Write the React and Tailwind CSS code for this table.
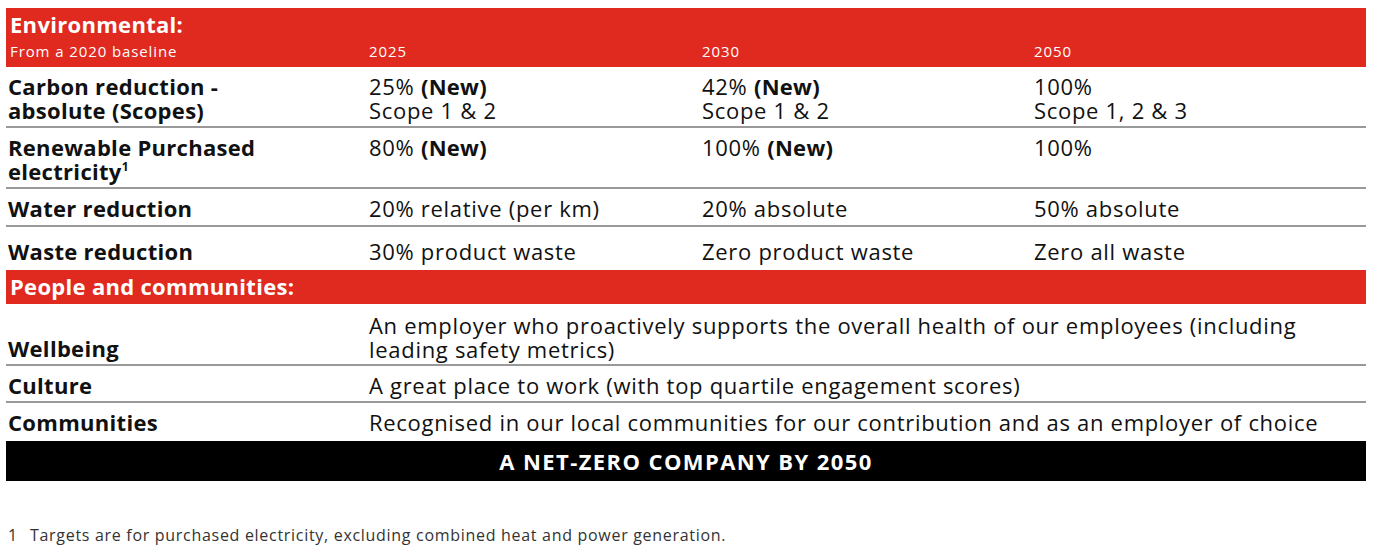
const cols = 'grid grid-cols-[363px_333px_332px_332px]';

const envRows = [
  {
    label: ['Carbon reduction -', 'absolute (Scopes)'],
    vals: [
      [<>25% <b className="tracking-[0.3px]">(New)</b></>, 'Scope 1 & 2'],
      [<>42% <b className="tracking-[0.3px]">(New)</b></>, 'Scope 1 & 2'],
      ['100%', 'Scope 1, 2 & 3'],
    ],
    cls: 'h-[61px] pt-[7px] border-b-2',
  },
  {
    label: ['Renewable Purchased', <>electricity<sup className="text-[12px] -top-[9px] leading-none">1</sup></>],
    vals: [
      [<>80% <b className="tracking-[0.3px]">(New)</b></>],
      [<>100% <b className="tracking-[0.3px]">(New)</b></>],
      ['100%'],
    ],
    cls: 'h-[61px] pt-[7px] border-b-2',
  },
  {
    label: ['Water reduction'],
    vals: [['20% relative (per km)'], ['20% absolute'], ['50% absolute']],
    cls: 'h-[38px] pt-[7px] border-b-2',
  },
  {
    label: ['Waste reduction'],
    vals: [['30% product waste'], ['Zero product waste'], ['Zero all waste']],
    cls: 'h-[43px] pt-[12px]',
  },
];

const peopleRows = [
  {
    label: 'Wellbeing',
    text: 'An employer who proactively supports the overall health of our employees (including leading safety metrics)',
    cls: 'h-[62px] pt-[9px] border-b-2',
    labelCls: 'pt-[23px]',
  },
  {
    label: 'Culture',
    text: 'A great place to work (with top quartile engagement scores)',
    cls: 'h-[37px] pt-[7px] border-b-2',
    labelCls: '',
  },
  {
    label: 'Communities',
    text: 'Recognised in our local communities for our contribution and as an employer of choice',
    cls: 'h-[38px] pt-[7px]',
    labelCls: '',
  },
];

export default function App() {
  return (
    <div className="w-[1380px] h-[555px] bg-white pl-[6px] pt-[8px] font-['Open_Sans',sans-serif] text-[#111]">
      <div className="w-[1360px]">
        {/* Environmental header */}
        <div className="h-[59px] bg-[#e0291f] text-white pt-[4px]">
          <div className="pl-[4px] text-[22px] font-bold leading-[24px] tracking-[0.3px]">Environmental:</div>
          <div className={`${cols} text-[15px] leading-[20px] mt-[5px] tracking-[0.9px]`}>
            <div className="pl-[4px]">From a 2020 baseline</div>
            <div>2025</div>
            <div>2030</div>
            <div>2050</div>
          </div>
        </div>

        {envRows.map((r, i) => (
          <div key={i} className={`${cols} items-start ${r.cls} border-[#999] text-[22px] leading-[24px] tracking-[0.7px]`}>
            <div className="pl-[2px] font-bold tracking-[0.3px]">
              {r.label.map((l, j) => <div key={j}>{l}</div>)}
            </div>
            {r.vals.map((v, j) => (
              <div key={j}>
                {v.map((l, k) => <div key={k}>{l}</div>)}
              </div>
            ))}
          </div>
        ))}

        {/* People header */}
        <div className="h-[34px] bg-[#e0291f] text-white pt-[4px] pl-[4px] text-[22px] font-bold leading-[24px] tracking-[0.3px]">
          People and communities:
        </div>

        {peopleRows.map((r, i) => (
          <div key={i} className={`grid grid-cols-[363px_1fr] items-start ${r.cls} border-[#999] text-[22px] leading-[24px] tracking-[0.7px]`}>
            <div className={`pl-[2px] font-bold tracking-[0.3px] ${r.labelCls}`}>{r.label}</div>
            <div className="pr-[10px]">{r.text}</div>
          </div>
        ))}

        <div className="h-[40px] bg-black text-white flex items-center justify-center text-[22px] font-bold tracking-[1.4px]">
          A NET-ZERO COMPANY BY 2050
        </div>
      </div>

      <div className="mt-[44px] pl-[2px] flex text-[16px] text-[#333] leading-[20px] tracking-[0.7px]">
        <span className="w-[22px]">1</span>
        <span>Targets are for purchased electricity, excluding combined heat and power generation.</span>
      </div>
    </div>
  );
}
